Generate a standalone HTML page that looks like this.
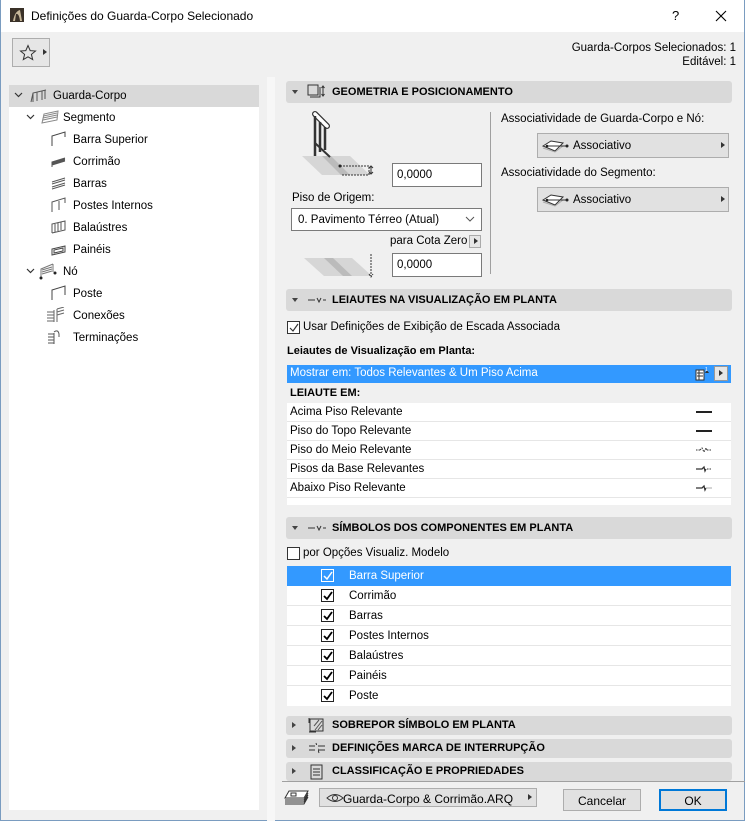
<!DOCTYPE html>
<html><head><meta charset="utf-8">
<style>
*{margin:0;padding:0;box-sizing:border-box}
body{width:745px;height:821px;overflow:hidden;background:#f0f0f0;font-family:"Liberation Sans",sans-serif;font-size:11.5px;color:#000;position:relative}
.a{position:absolute;white-space:nowrap}
.win{position:absolute;left:0;top:0;width:745px;height:821px;border:1px solid #7a9cc0;border-top:none}
.hdr{position:absolute;left:286px;width:446px;background:#d9d9d9;border-radius:3px;font-weight:bold;font-size:11px}
.hdr .t{position:absolute;left:46px;top:5px}
.tri{position:absolute;left:6px;width:0;height:0}
.tri.d{top:9px;border-left:3.5px solid transparent;border-right:3.5px solid transparent;border-top:4px solid #444}
.tri.r{top:6px;border-top:3.5px solid transparent;border-bottom:3.5px solid transparent;border-left:4px solid #444}
.inp{position:absolute;background:#fff;border:1px solid #7a7a7a;padding:5px 4px 0}
.btn{position:absolute;background:#e1e1e1;border:1px solid #adadad}
.cb{position:absolute;width:13px;height:13px;border:1px solid #333;background:#fff}
.row{position:absolute;left:287px;width:444px;background:#fff;border-bottom:1px solid #e6e6e6}
.row span{position:absolute;left:3px;top:3px}
.srow{position:absolute;left:287px;width:444px;height:20px;background:#fff;border-bottom:1px solid #e6e6e6}
.srow .cb{left:34px;top:3px;border-color:#222}
.srow span{position:absolute;left:62px;top:4px}
.tree span.t{position:absolute;top:5px}
</style></head><body>
<div class="win"></div>
<!-- title -->
<div class="a" style="left:1px;top:0;width:743px;height:32px;background:#fff"></div>
<svg class="a" style="left:10px;top:8px" width="14" height="14"><rect width="14" height="14" fill="#3a3128"/><path d="M3 13 Q5 3 10 2 L12 13 L10 13 Q9 5 6 6 L5 13Z" fill="#c8b89a"/></svg>
<div class="a" style="left:31px;top:9px;font-size:12px">Definições do Guarda-Corpo Selecionado</div>
<div class="a" style="left:672px;top:8px;font-size:13px">?</div>
<svg class="a" style="left:715px;top:10px" width="12" height="12"><path d="M1 1L11 11M11 1L1 11" stroke="#000" stroke-width="1.1"/></svg>
<!-- star -->
<div class="a" style="left:12px;top:38px;width:38px;height:29px;border:1px solid #adadad;background:#e6e6e6"></div>
<svg class="a" style="left:19px;top:44px" width="18" height="17"><path d="M9 1.5L11.2 6.6 16.5 7 12.4 10.4 13.7 15.6 9 12.8 4.3 15.6 5.6 10.4 1.5 7 6.8 6.6Z" fill="none" stroke="#333" stroke-width="1"/></svg>
<div class="a" style="left:43px;top:49px;border-top:3.5px solid transparent;border-bottom:3.5px solid transparent;border-left:4px solid #333"></div>
<div class="a" style="right:9px;top:41px;text-align:right;line-height:14px">Guarda-Corpos Selecionados: 1<br>Editável: 1</div>
<!-- left tree -->
<div class="a" style="left:9px;top:85px;width:250px;height:725px;background:#fff"></div>
<div class="a" style="left:9px;top:85px;width:250px;height:22px;background:#d9d9d9"></div>
<div class="a" style="left:267px;top:77px;width:8px;height:744px;background:#f7f7f7"></div>
<div class="tree">
<svg class="a" style="left:14px;top:92px" width="9" height="6"><path d="M1 1L4.5 4.5 8 1" fill="none" stroke="#333" stroke-width="1.2"/></svg>
<svg class="a" style="left:30px;top:89px" width="18" height="14"><path d="M1 13L3 4 16 1M3 4V13M7 3V12M12 2V11M15 1V10" fill="none" stroke="#555"/></svg>
<span class="a t" style="left:53px;top:90px">Guarda-Corpo</span>
<svg class="a" style="left:26px;top:114px" width="9" height="6"><path d="M1 1L4.5 4.5 8 1" fill="none" stroke="#333" stroke-width="1.2"/></svg>
<svg class="a" style="left:41px;top:110px" width="18" height="14"><path d="M1 13L3 4 17 1 16 10Z M2 10L16 7M2 8L16 5M2.5 6L16 3" fill="none" stroke="#888"/></svg>
<span class="a t" style="left:63px;top:112px">Segmento</span>
<svg class="a" style="left:51px;top:131px" width="16" height="16"><path d="M1 15V5L14 1V6" fill="none" stroke="#444"/></svg>
<span class="a" style="left:73px;top:134px">Barra Superior</span>
<svg class="a" style="left:51px;top:153px" width="16" height="16"><path d="M1 14V9L14 5M1 10L14 6M1 12L14 8M1 11L14 7" fill="none" stroke="#555"/></svg>
<span class="a" style="left:73px;top:156px">Corrimão</span>
<svg class="a" style="left:51px;top:175px" width="16" height="16"><path d="M1 14L14 10M1 12L14 8M1 9L14 5M1 7L14 3" fill="none" stroke="#555"/></svg>
<span class="a" style="left:73px;top:178px">Barras</span>
<svg class="a" style="left:51px;top:197px" width="16" height="16"><path d="M1 15V5L14 1V6M8 4V13" fill="none" stroke="#555"/></svg>
<span class="a" style="left:73px;top:200px">Postes Internos</span>
<svg class="a" style="left:51px;top:219px" width="16" height="16"><path d="M1 14V5L14 2V11L1 14M4 5V13M7 4V12M10 3V11" fill="none" stroke="#555"/></svg>
<span class="a" style="left:73px;top:222px">Balaústres</span>
<svg class="a" style="left:51px;top:241px" width="16" height="16"><path d="M1 14V8L14 5V11Z M3 12V9L12 7V10Z" fill="none" stroke="#444"/></svg>
<span class="a" style="left:73px;top:244px">Painéis</span>
<svg class="a" style="left:26px;top:268px" width="9" height="6"><path d="M1 1L4.5 4.5 8 1" fill="none" stroke="#333" stroke-width="1.2"/></svg>
<svg class="a" style="left:39px;top:262px" width="20" height="18"><path d="M2 16V7L14 2 M14 2V10M3 8L13 5M3 10L13 7M3 12L13 9" fill="none" stroke="#777"/><circle cx="2" cy="16" r="1.5" fill="#222"/><circle cx="16" cy="11" r="1.5" fill="#222"/></svg>
<span class="a" style="left:63px;top:266px">Nó</span>
<svg class="a" style="left:51px;top:285px" width="16" height="16"><path d="M1 15V5L14 1V10" fill="none" stroke="#444"/></svg>
<span class="a" style="left:73px;top:288px">Poste</span>
<svg class="a" style="left:46px;top:307px" width="20" height="16"><path d="M1 5H8M1 8H8M1 11H8M1 14H8M8 3V15M11 2V15M11 2L18 0M11 5L18 3M11 8L18 6" fill="none" stroke="#666"/></svg>
<span class="a" style="left:73px;top:310px">Conexões</span>
<svg class="a" style="left:46px;top:329px" width="20" height="16"><path d="M2 5H8M2 8H8M2 11H8M2 14H8M8 4V15M8 3Q12 0 13 5V8" fill="none" stroke="#555"/></svg>
<span class="a" style="left:73px;top:332px">Terminações</span>
</div>
<!-- GEOMETRIA -->
<div class="hdr" style="top:81px;height:22px"><div class="tri d"></div>
<svg class="a" style="left:21px;top:3px" width="20" height="16"><rect x="1" y="1" width="10" height="10" fill="none" stroke="#333"/><path d="M3 13H13V3M16 2V12M14.5 4L16 2 17.5 4M14.5 10L16 12 17.5 10" fill="none" stroke="#333"/></svg>
<span class="t">GEOMETRIA E POSICIONAMENTO</span></div>
<svg class="a" style="left:298px;top:108px" width="82" height="72"><path d="M4 48H52L72 67H24Z" fill="#d6d6d6"/><path d="M24 48H33L52 67H43Z" fill="#bbb"/><path d="M17 6L29 18" stroke="#333" stroke-width="6" stroke-linecap="round"/><path d="M17 6L29 18" stroke="#fff" stroke-width="3.5" stroke-linecap="round"/><path d="M17 8V48M22 14V44M27 19V42" stroke="#333" stroke-width="2.5"/><path d="M17 35L32 49" stroke="#333" stroke-width="2"/><circle cx="42" cy="58" r="1.5" fill="#222"/><path d="M42 58H71V67H44" fill="none" stroke="#333" stroke-dasharray="2 1"/><path d="M73 58V66M71 60L73 58 75 60M71 64L73 66 75 64" stroke="#333" fill="none"/></svg>
<div class="inp" style="left:392px;top:163px;width:90px;height:24px">0,0000</div>
<div class="a" style="left:292px;top:192px">Piso de Origem:</div>
<div class="inp" style="left:291px;top:208px;width:191px;height:23px;padding-left:6px">0. Pavimento Térreo (Atual)</div>
<svg class="a" style="left:465px;top:216px" width="10" height="6"><path d="M1 1L5 5 9 1" fill="none" stroke="#555"/></svg>
<div class="a" style="left:390px;top:235px">para Cota Zero</div>
<div class="a" style="left:469px;top:235px;width:12px;height:13px;border:1px solid #aaa;background:#e6e6e6"></div>
<div class="a" style="left:474px;top:238px;border-top:3.5px solid transparent;border-bottom:3.5px solid transparent;border-left:4px solid #333"></div>
<svg class="a" style="left:300px;top:252px" width="80" height="28"><path d="M4 6H52L72 24H24Z" fill="#d6d6d6"/><path d="M24 6H33L52 24H43Z" fill="#bbb"/><path d="M71 2V24M69 22L71 25 73 22" stroke="#333" fill="none" stroke-dasharray="2 1"/></svg>
<div class="inp" style="left:392px;top:253px;width:90px;height:24px">0,0000</div>
<div class="a" style="left:490px;top:112px;width:1px;height:162px;background:#a0a0a0"></div>
<div class="a" style="left:501px;top:113px">Associatividade de Guarda-Corpo e Nó:</div>
<div class="btn" style="left:537px;top:133px;width:192px;height:25px"><svg class="a" style="left:3px;top:5px" width="32" height="14"><path d="M2 7L10 2 22 4 14 12Z" fill="#fff" stroke="#333"/><path d="M2 9L14 13 22 7" fill="none" stroke="#aaa"/><path d="M6 7H26" stroke="#333"/><circle cx="6" cy="7" r="1.3" fill="#222"/><circle cx="26" cy="7" r="1.5" fill="#222"/></svg><span class="a" style="left:35px;top:6px">Associativo</span><div class="a" style="left:183px;top:8px;border-top:3.5px solid transparent;border-bottom:3.5px solid transparent;border-left:4px solid #333"></div></div>
<div class="a" style="left:501px;top:167px">Associatividade do Segmento:</div>
<div class="btn" style="left:537px;top:187px;width:192px;height:25px"><svg class="a" style="left:3px;top:5px" width="32" height="14"><path d="M2 7L10 2 22 4 14 12Z" fill="#fff" stroke="#333"/><path d="M2 9L14 13 22 7" fill="none" stroke="#aaa"/><path d="M6 7H26" stroke="#333"/><circle cx="6" cy="7" r="1.3" fill="#222"/><circle cx="26" cy="7" r="1.5" fill="#222"/></svg><span class="a" style="left:35px;top:6px">Associativo</span><div class="a" style="left:183px;top:8px;border-top:3.5px solid transparent;border-bottom:3.5px solid transparent;border-left:4px solid #333"></div></div>
<!-- LEIAUTES -->
<div class="hdr" style="top:289px;height:22px"><div class="tri d"></div>
<svg class="a" style="left:21px;top:7px" width="20" height="8"><path d="M1 4H8M10 2L12 6 14 2M16 4H19" stroke="#333" fill="none"/></svg>
<span class="t">LEIAUTES NA VISUALIZAÇÃO EM PLANTA</span></div>
<div class="cb" style="left:287px;top:321px;border-color:#333"></div>
<svg class="a" style="left:288px;top:322px" width="12" height="12"><path d="M2 6L5 9 10 2" fill="none" stroke="#333" stroke-width="1.2"/></svg>
<div class="a" style="left:303px;top:321px">Usar Definições de Exibição de Escada Associada</div>
<div class="a" style="left:287px;top:345px;font-weight:bold;font-size:11px">Leiautes de Visualização em Planta:</div>
<div class="a" style="left:287px;top:365px;width:444px;height:18px;background:#3399ff;color:#fff"><span class="a" style="left:3px;top:2px">Mostrar em: Todos Relevantes &amp; Um Piso Acima</span>
<svg class="a" style="left:408px;top:2px" width="16" height="14"><rect x="1" y="3" width="8" height="10" fill="#fff" stroke="#333"/><path d="M2 6H8M2 9H8M4 3V13" stroke="#333"/><path d="M10 6L12 3 14 6" fill="#333"/><text x="10" y="4" font-size="5" fill="#fff">1</text></svg>
<div class="a" style="left:427px;top:1px;width:14px;height:15px;background:#e6e6e6;border:1px solid #999"></div>
<div class="a" style="left:432px;top:5px;border-top:3.5px solid transparent;border-bottom:3.5px solid transparent;border-left:4px solid #333"></div></div>
<div class="a" style="left:290px;top:387px;font-weight:bold;font-size:11px">LEIAUTE EM:</div>
<div class="a" style="left:287px;top:403px;width:444px;height:102px;background:#fff"></div>
<div class="row" style="top:403px;height:19px"><span>Acima Piso Relevante</span><div class="a" style="left:409px;top:8px;width:16px;height:2px;background:#222"></div></div>
<div class="row" style="top:422px;height:19px"><span>Piso do Topo Relevante</span><div class="a" style="left:409px;top:8px;width:16px;height:2px;background:#222"></div></div>
<div class="row" style="top:441px;height:19px"><span>Piso do Meio Relevante</span><svg class="a" style="left:409px;top:5px" width="16" height="8"><path d="M0 4H4M11 4H16M4 4L6 2 8 6 10 2 11 4" stroke="#333" stroke-dasharray="1.5 1" fill="none"/></svg></div>
<div class="row" style="top:460px;height:19px"><span>Pisos da Base Relevantes</span><svg class="a" style="left:409px;top:5px" width="16" height="8"><path d="M0 4H6L8 2 9 6 10 4" stroke="#333" fill="none" stroke-width="1.3"/><path d="M11 4H16" stroke="#333" stroke-dasharray="1.5 1"/></svg></div>
<div class="row" style="top:479px;height:19px"><span>Abaixo Piso Relevante</span><svg class="a" style="left:409px;top:5px" width="16" height="8"><path d="M0 4H6L8 2 9 6 10 4" stroke="#333" fill="none" stroke-width="1.3"/><path d="M10 4H16" stroke="#aaa"/></svg></div>
<!-- SIMBOLOS -->
<div class="hdr" style="top:517px;height:22px"><div class="tri d"></div>
<svg class="a" style="left:21px;top:7px" width="20" height="8"><path d="M1 4H8M10 2L12 6 14 2M16 4H19" stroke="#333" fill="none"/></svg>
<span class="t">SÍMBOLOS DOS COMPONENTES EM PLANTA</span></div>
<div class="cb" style="left:287px;top:547px"></div>
<div class="a" style="left:303px;top:547px">por Opções Visualiz. Modelo</div>
<div class="srow" style="top:566px;background:#3399ff;border:none;color:#fff"><div class="cb" style="border-color:#fff;background:#3399ff"></div><svg class="a" style="left:35px;top:4px" width="12" height="12"><path d="M2 6L5 9 10 2" fill="none" stroke="#fff" stroke-width="1.5"/></svg><span>Barra Superior</span></div>
<div class="srow" style="top:586px"><div class="cb"></div><svg class="a" style="left:35px;top:4px" width="12" height="12"><path d="M2 6L5 9 10 2" fill="none" stroke="#000" stroke-width="1.8"/></svg><span>Corrimão</span></div>
<div class="srow" style="top:606px"><div class="cb"></div><svg class="a" style="left:35px;top:4px" width="12" height="12"><path d="M2 6L5 9 10 2" fill="none" stroke="#000" stroke-width="1.8"/></svg><span>Barras</span></div>
<div class="srow" style="top:626px"><div class="cb"></div><svg class="a" style="left:35px;top:4px" width="12" height="12"><path d="M2 6L5 9 10 2" fill="none" stroke="#000" stroke-width="1.8"/></svg><span>Postes Internos</span></div>
<div class="srow" style="top:646px"><div class="cb"></div><svg class="a" style="left:35px;top:4px" width="12" height="12"><path d="M2 6L5 9 10 2" fill="none" stroke="#000" stroke-width="1.8"/></svg><span>Balaústres</span></div>
<div class="srow" style="top:666px"><div class="cb"></div><svg class="a" style="left:35px;top:4px" width="12" height="12"><path d="M2 6L5 9 10 2" fill="none" stroke="#000" stroke-width="1.8"/></svg><span>Painéis</span></div>
<div class="srow" style="top:686px;border:none"><div class="cb"></div><svg class="a" style="left:35px;top:4px" width="12" height="12"><path d="M2 6L5 9 10 2" fill="none" stroke="#000" stroke-width="1.8"/></svg><span>Poste</span></div>
<!-- collapsed -->
<div class="hdr" style="top:716px;height:19px"><div class="tri r"></div>
<svg class="a" style="left:22px;top:1px" width="18" height="17"><rect x="2" y="2" width="13" height="12" fill="none" stroke="#333"/><path d="M7 13L14 4M10 13L14 8M6 9L11 3" stroke="#555"/><path d="M1 1V6M1 15H8" stroke="#333"/></svg>
<span class="t" style="top:3px">SOBREPOR SÍMBOLO EM PLANTA</span></div>
<div class="hdr" style="top:739px;height:19px"><div class="tri r"></div>
<svg class="a" style="left:22px;top:3px" width="18" height="12"><path d="M1 4H17M1 8H17M8 1L11 11" stroke="#333" fill="none"/><rect x="7" y="3" width="3" height="6" fill="#d9d9d9"/></svg>
<span class="t" style="top:3px">DEFINIÇÕES MARCA DE INTERRUPÇÃO</span></div>
<div class="hdr" style="top:762px;height:19px"><div class="tri r"></div>
<svg class="a" style="left:24px;top:2px" width="14" height="16"><path d="M1 1H12V15H1Z" fill="none" stroke="#333"/><path d="M3 5H10M3 8H10M3 11H10" stroke="#333"/></svg>
<span class="t" style="top:3px">CLASSIFICAÇÃO E PROPRIEDADES</span></div>
<!-- bottom -->
<div class="a" style="left:282px;top:781px;width:463px;height:1px;background:#a0a0a0"></div>
<svg class="a" style="left:283px;top:789px" width="26" height="18"><path d="M6 2H25L21 9H2Z" fill="#fff" stroke="#333"/><path d="M2 11H21L25 4M2 13H21L25 6M2 15H21L25 8" fill="none" stroke="#333"/><rect x="8" y="4" width="5" height="3" fill="none" stroke="#333"/></svg>
<div class="btn" style="left:319px;top:788px;width:218px;height:19px"><svg class="a" style="left:6px;top:3px" width="18" height="12"><path d="M1 6Q9 -1 17 6Q9 13 1 6Z" fill="none" stroke="#333"/><circle cx="9" cy="6" r="2.5" fill="none" stroke="#333"/></svg><span class="a" style="left:23px;top:3px;font-size:12px">Guarda-Corpo &amp; Corrimão.ARQ</span><div class="a" style="left:208px;top:5px;border-top:3.5px solid transparent;border-bottom:3.5px solid transparent;border-left:4px solid #333"></div></div>
<div class="btn" style="left:563px;top:789px;width:78px;height:22px;text-align:center;padding-top:4px;font-size:12px">Cancelar</div>
<div class="btn" style="left:659px;top:789px;width:68px;height:22px;border:2px solid #0078d7;text-align:center;padding-top:3px;font-size:12px">OK</div>
</body></html>
